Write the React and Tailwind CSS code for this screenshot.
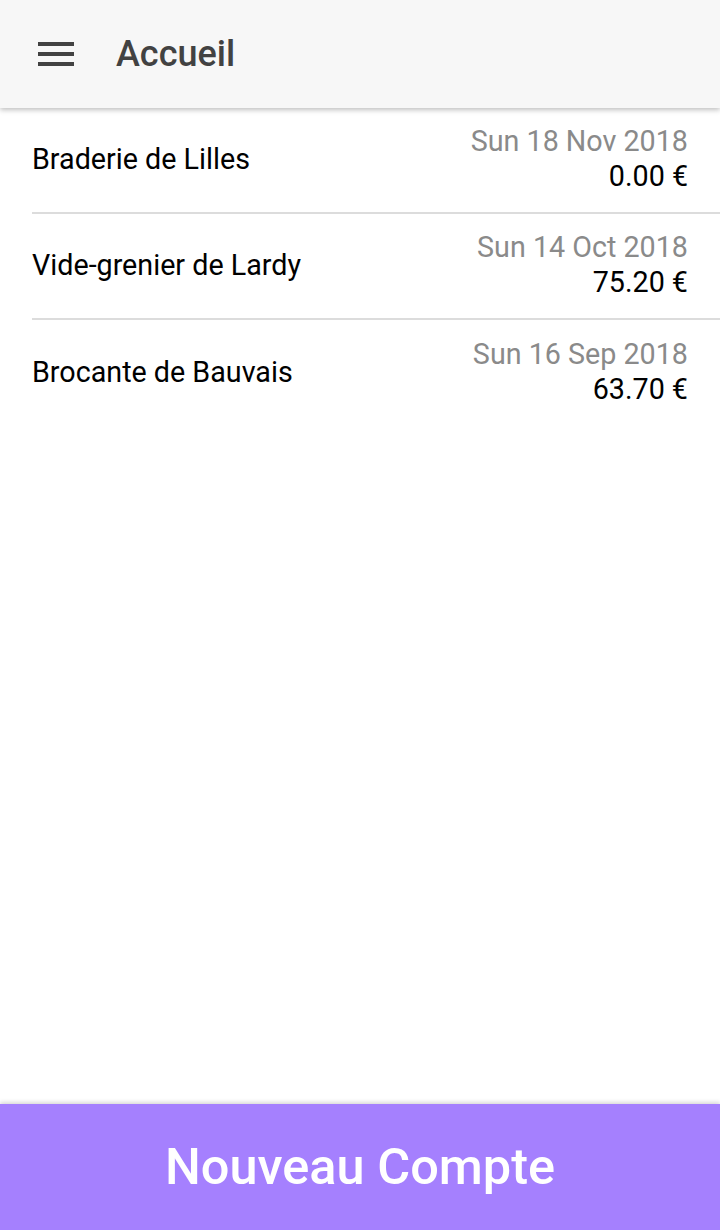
import React from "react";

const accounts = [
  { name: "Braderie de Lilles", date: "Sun 18 Nov 2018", total: "0.00 €" },
  { name: "Vide-grenier de Lardy", date: "Sun 14 Oct 2018", total: "75.20 €" },
  { name: "Brocante de Bauvais", date: "Sun 16 Sep 2018", total: "63.70 €" },
];

const App = () => {
  return (
    <div className="flex flex-col h-[1230px] bg-white font-['Roboto',sans-serif]">
      {/* Top bar */}
      <header className="relative z-10 flex items-center h-[108px] bg-[#f7f7f7] shadow-[0_2px_5px_rgba(0,0,0,0.25)]">
        <button className="ml-[38px] flex flex-col gap-[6px] w-[36px]">
          <span className="block h-[4px] bg-[#424242]"></span>
          <span className="block h-[4px] bg-[#424242]"></span>
          <span className="block h-[4px] bg-[#424242]"></span>
        </button>
        <h1 className="ml-[42px] text-[36px] font-medium text-[#424242] leading-none">
          Accueil
        </h1>
      </header>

      {/* Accounts list */}
      <ul className="flex-1">
        {accounts.map((a, i) => (
          <li key={a.name} className="pl-[32px]">
            <div
              className={`flex items-center justify-between pr-[32px] h-[106px] ${
                i < accounts.length - 1 ? "border-b-2 border-[#dcdcdc]" : ""
              }`}
            >
              <span className="text-[28.7px] text-black">{a.name}</span>
              <div className="flex flex-col items-end leading-[35px] -mt-[2px]">
                <span className="text-[28.7px] text-[#8a8a8a]">{a.date}</span>
                <span className="text-[28.7px] text-black">{a.total}</span>
              </div>
            </div>
          </li>
        ))}
      </ul>

      {/* Bottom action */}
      <button className="h-[126px] bg-[#a580fe] text-white text-[50.5px] font-medium shadow-[0_-2px_4px_rgba(0,0,0,0.15)]">
        Nouveau Compte
      </button>
    </div>
  );
};

export default App;
